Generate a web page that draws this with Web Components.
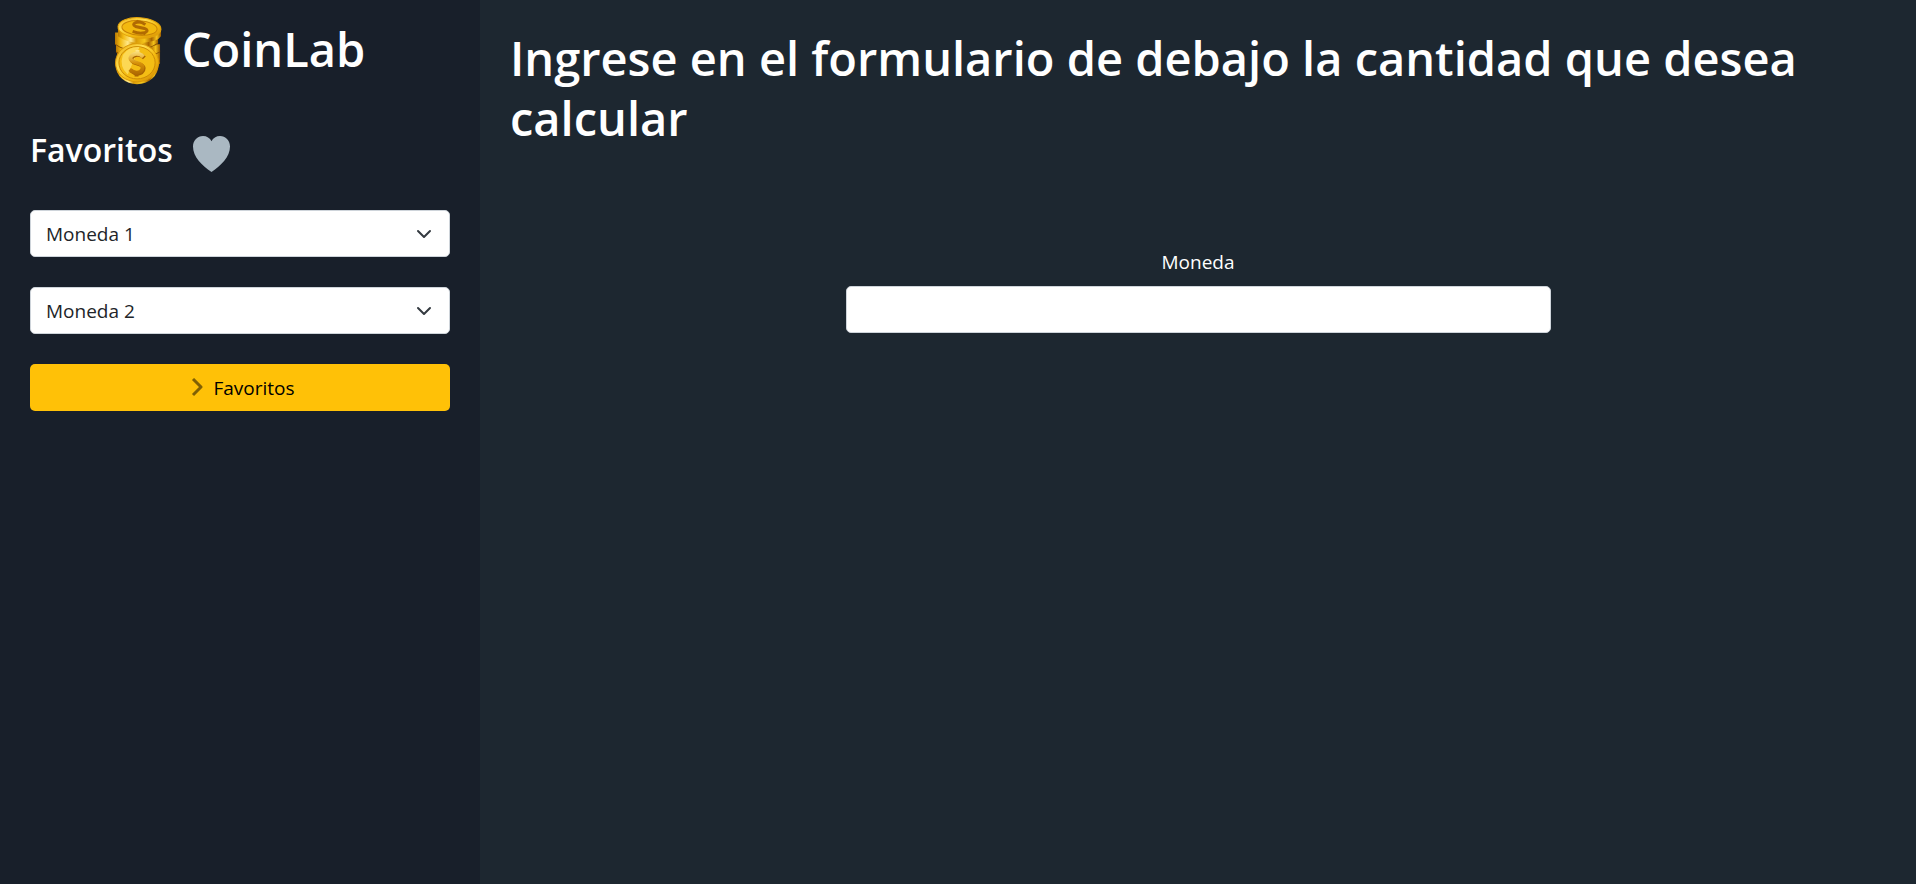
<!DOCTYPE html>
<html lang="es">
<head>
<meta charset="utf-8">
<meta name="viewport" content="width=device-width, initial-scale=1">
<title>CoinLab</title>
<style>
  html, body { margin: 0; min-height: 100%; }
  body { background: #1d2730; color: #fff; font: 19px/30px "Open Sans", "Noto Sans", sans-serif; }
</style>
</head>
<body>
<coin-app>
  <coin-brand slot="side">CoinLab</coin-brand>
  <coin-favorites slot="side"></coin-favorites>
  <coin-heading>Ingrese en el formulario de debajo la cantidad que desea calcular</coin-heading>
  <coin-field>Moneda</coin-field>
</coin-app>
<script>
class Base extends HTMLElement {
  constructor() {
    super();
    this.attachShadow({ mode: "open" }).innerHTML = this.constructor.markup;
  }
}

customElements.define("coin-app", class extends Base {
  static markup = `
    <style>
      :host { display: grid; grid-template-columns: calc(25% + 1px) 1fr; min-height: 100vh; }
      aside { background: #181f2a; padding: 0 30px; min-width: 0; }
      main { min-width: 0; padding-top: 28px; }
    </style>
    <aside><slot name="side"></slot></aside>
    <main><slot></slot></main>`;
});

customElements.define("coin-brand", class extends Base {
  static markup = `
    <style>
      :host { display: flex; justify-content: center; align-items: center; gap: 20px; padding: 16px 0; }
      svg { width: 47px; height: 70px; flex: none; }
      h1 { margin: 0 0 4px; font-size: 47px; line-height: 60px; font-weight: 600; }
    </style>
    <svg viewBox="0 0 48 70" aria-hidden="true">
      <defs>
        <linearGradient id="side" x1="0" x2="1">
          <stop offset="0" stop-color="#b87803"/><stop offset=".12" stop-color="#f2b90f"/>
          <stop offset=".3" stop-color="#ffe98a"/><stop offset=".42" stop-color="#d89a08"/>
          <stop offset=".62" stop-color="#f6c71c"/><stop offset=".78" stop-color="#a96500"/>
          <stop offset=".9" stop-color="#f5c31a"/><stop offset="1" stop-color="#9a5b00"/>
        </linearGradient>
        <linearGradient id="face" x1="0" y1="0" x2="1" y2="1">
          <stop offset="0" stop-color="#eda90a"/><stop offset=".35" stop-color="#ffdf50"/>
          <stop offset=".6" stop-color="#f5bb10"/><stop offset="1" stop-color="#d08a03"/>
        </linearGradient>
        <linearGradient id="mark" x1="0" y1="0" x2="0" y2="1">
          <stop offset="0" stop-color="#ffe98c"/><stop offset=".5" stop-color="#d69008"/><stop offset="1" stop-color="#a76200"/>
        </linearGradient>
      </defs>
      <path d="M2 34v14q20 14 44 0V34z" fill="url(#side)"/>
      <path d="M1 28v8q20 14 45 0v-8z" fill="url(#side)"/>
      <path d="M1 36q20 14 45 0M2 45q20 12 44 0" fill="none" stroke="#895000" stroke-width="1"/>
      <path d="M0 16v12q20 15 44 0V16z" fill="url(#side)"/>
      <path d="M0 28q20 14 44-1" fill="none" stroke="#8c5200" stroke-width="1"/>
      <path d="M3 11v9q17 12 41 3l3-3v-9z" fill="url(#side)"/>
      <ellipse cx="25" cy="11.500" rx="22" ry="10.500" transform="rotate(4 25 11.500)" fill="url(#face)" stroke="#e2a30b" stroke-width="1"/>
      <ellipse cx="25" cy="11.500" rx="18" ry="7.500" transform="rotate(4 25 11.500)" fill="#f3b90f" stroke="#c98506" stroke-width="1"/>
      <path d="M31 8q-5-4-10-2-4 2 0 4l9 2q5 2 1 4-5 2-13-1" fill="none" stroke="#b16b02" stroke-width="3"/>
      <path d="M22 4l3 2M27 16l4 2" stroke="#b16b02" stroke-width="2"/>
      <ellipse cx="22.500" cy="49" rx="22" ry="20" fill="url(#side)"/>
      <ellipse cx="22.500" cy="47" rx="22" ry="19.500" fill="url(#face)" stroke="#d99808" stroke-width="1"/>
      <ellipse cx="22.500" cy="47" rx="18.500" ry="16.500" fill="#f4bd14" stroke="#cb8806" stroke-width="1"/>
      <path d="M8 39q6-9 17-8l-12 28q-9-8-5-20z" fill="#ffe26a" opacity=".75"/>
      <path d="M29 41q-5-5-11-2-5 4 1 7l6 2q6 3 1 8-5 3-11-2" fill="none" stroke="#a96301" stroke-width="4" transform="translate(1 1)"/>
      <path d="M29 41q-5-5-11-2-5 4 1 7l6 2q6 3 1 8-5 3-11-2M23 34v4M22 57v4" fill="none" stroke="url(#mark)" stroke-width="4"/>
    </svg>
    <h1><slot></slot></h1>`;
});

customElements.define("coin-favorites", class extends Base {
  static markup = `
    <style>
      :host { display: block; }
      header { display: flex; align-items: center; gap: 20px; height: 40px; margin: 28px 0 40px; }
      h2 { margin: 0; font-size: 32px; line-height: 40px; font-weight: 600; }
      header svg { width: 37px; height: 36px; margin-top: 8px; }
      form { display: grid; gap: 30px; }
      select, button { box-sizing: border-box; width: 100%; height: 47px; font: inherit; border-radius: 5px; margin: 0; }
      select {
        appearance: none; padding: 0 45px 0 15px; color: #212529; border: 1px solid #ced4da;
        background: #fff url("data:image/svg+xml,%3Csvg xmlns='http://www.w3.org/2000/svg' viewBox='0 0 16 16'%3E%3Cpath fill='none' stroke='%23343a40' stroke-linecap='round' stroke-linejoin='round' stroke-width='2' d='M2 5l6 6 6-6'/%3E%3C/svg%3E") no-repeat right 17px center / 16px 16px;
      }
      button { display: flex; align-items: center; justify-content: center; gap: 8px; padding: 0; border: 0; background: #ffc107; color: #000; }
      button svg { width: 20px; height: 20px; }
    </style>
    <header>
      <h2>Favoritos</h2>
      <svg viewBox="0 0 37 36" aria-hidden="true"><path fill="#aab8c2" d="M37 10.500C37 4.500 32.500 0 27 0c-3.700 0-7 2-8.500 5.300C17 2 13.700 0 10 0 4.500 0 0 4.500 0 10.500 0 21 9 29.500 18.500 36 28 29.500 37 21 37 10.500z"/></svg>
    </header>
    <form>
      <select aria-label="Moneda 1"><option>Moneda 1</option></select>
      <select aria-label="Moneda 2"><option>Moneda 2</option></select>
      <button type="button">
        <svg viewBox="0 0 20 20" aria-hidden="true"><path d="M8 1l8 8-8 8" fill="none" stroke="#806004" stroke-width="3" stroke-linejoin="round"/></svg>
        <span>Favoritos</span>
      </button>
    </form>`;
});

customElements.define("coin-heading", class extends Base {
  static markup = `
    <style>
      :host { display: block; padding: 0 30px; }
      h2 { margin: 0; font-size: 47px; line-height: 60px; font-weight: 600; }
    </style>
    <h2><slot></slot></h2>`;
});

customElements.define("coin-field", class extends Base {
  static markup = `
    <style>
      :host { display: block; width: calc(50% - 13px); margin: 99px auto 0; text-align: center; }
      label { display: block; margin-bottom: 9px; }
      input { display: block; box-sizing: border-box; width: 100%; height: 47px; padding: 0 15px; font: inherit; color: #212529; background: #fff; border: 1px solid #ced4da; border-radius: 5px; }
    </style>
    <label for="amount"><slot></slot></label>
    <input id="amount" type="text">`;
});
</script>
</body>
</html>
